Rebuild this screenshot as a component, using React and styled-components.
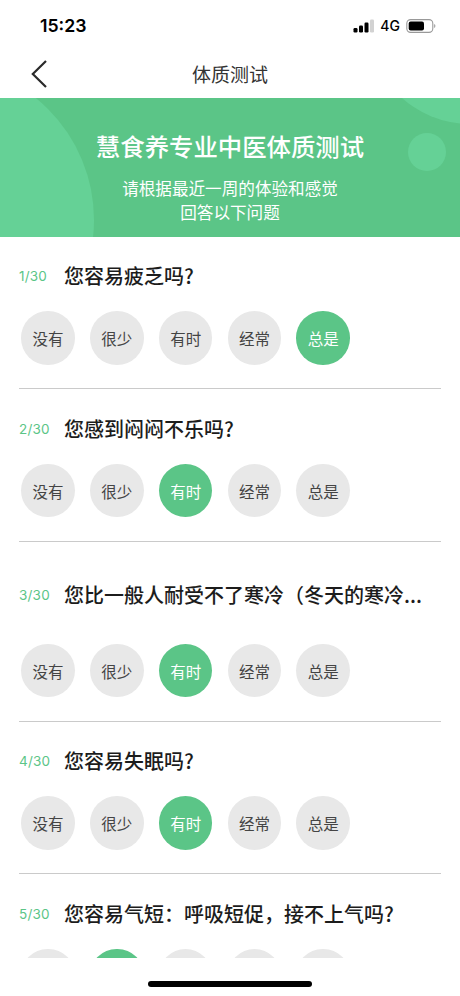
import React, { useState } from 'react';
import styled, { createGlobalStyle, ThemeProvider } from 'styled-components';

const theme = {
    colors: {
        green: '#5bc587',
        lightGreen: '#65d196',
        grey: '#e8e8e8',
        line: '#cacaca',
        white: '#fff',
        black: '#000',
        text: '#1c1c1c',
    },
};

const GlobalStyle = createGlobalStyle`
    * {
        box-sizing: border-box;
    }

    body {
        margin: 0;
        background-color: #fff;
        font-family: "Noto Sans CJK SC", sans-serif;
    }
`;

const Screen = styled.div`
    display: flex;
    flex-direction: column;
    height: 996px;
    overflow: hidden;
    background-color: ${({ theme }) => theme.colors.white};
`;

const StatusBar = styled.div`
    height: 50px;
    padding: 1px 23px 0 40px;
    display: flex;
    align-items: center;
    justify-content: space-between;
    color: ${({ theme }) => theme.colors.black};
    font-family: Inter, "Liberation Sans", sans-serif;
`;

const Time = styled.span`
    font-size: 17.7px;
    font-weight: 600;
`;

const StatusIcons = styled.div`
    display: flex;
    align-items: center;
`;

const Network = styled.span`
    margin: 0 6px 0 6px;
    font-size: 14px;
    font-weight: 500;
`;

const NavBar = styled.div`
    height: 48px;
    flex-shrink: 0;
    display: grid;
    grid-template-columns: 80px 1fr 80px;
    align-items: center;
`;

const BackButton = styled.button`
    display: flex;
    padding: 0 0 1px 30px;
    border: none;
    background: none;
`;

const Title = styled.h1`
    margin: 0;
    font-size: 19px;
    font-weight: 400;
    line-height: 28px;
    text-align: center;
    color: #333;
`;

const StyledBanner = styled.div`
    position: relative;
    height: 139px;
    flex-shrink: 0;
    padding-top: 30px;
    overflow: hidden;
    text-align: center;
    color: ${({ theme }) => theme.colors.white};
    background-color: ${({ theme }) => theme.colors.green};
`;

const Bubble = styled.span`
    position: absolute;
    top: ${({ $top }) => $top}px;
    left: ${({ $left }) => $left}px;
    width: ${({ $size }) => $size}px;
    height: ${({ $size }) => $size}px;
    border-radius: 50%;
    background-color: ${({ theme }) => theme.colors.lightGreen};
`;

const BannerTitle = styled.h2`
    position: relative;
    margin: 0 0 13px;
    font-size: 24.4px;
    font-weight: 500;
    line-height: 36px;
`;

const BannerText = styled.p`
    position: relative;
    margin: 0;
    font-size: 16.6px;
    font-weight: 400;
    line-height: 23.5px;
`;

const QuestionList = styled.div`
    height: 721px;
    flex-shrink: 0;
    padding: 0 19px;
    overflow: hidden;
`;

const StyledQuestion = styled.div`
    padding: 25.3px 0 23.5px;
    border-bottom: 1px solid ${({ theme }) => theme.colors.line};
`;

const QuestionHeader = styled.div`
    height: ${({ $tall }) => ($tall ? '55.5px' : '28px')};
    display: flex;
    align-items: center;
`;

const Counter = styled.span`
    width: 45px;
    flex-shrink: 0;
    font-family: Inter, "Liberation Sans", sans-serif;
    font-size: 13.5px;
    letter-spacing: 0.2px;
    color: ${({ theme }) => theme.colors.green};
`;

const QuestionText = styled.h3`
    margin: 0;
    min-width: 0;
    font-size: 20px;
    font-weight: 500;
    line-height: 28px;
    white-space: nowrap;
    color: ${({ theme }) => theme.colors.text};
`;

const Options = styled.div`
    display: flex;
    gap: 15.2px;
    margin-top: 21.1px;
    padding-left: 2.3px;
`;

const Option = styled.button`
    width: 53.6px;
    height: 53.6px;
    flex-shrink: 0;
    padding: 0;
    border: none;
    border-radius: 50%;
    font-family: inherit;
    font-size: 15.5px;
    color: ${({ $active, theme }) => ($active ? theme.colors.white : '#444')};
    background-color: ${({ $active, theme }) => ($active ? theme.colors.green : theme.colors.grey)};
`;

const BottomBar = styled.div`
    flex: 1;
    display: flex;
    justify-content: center;
    padding-top: 23px;
`;

const HomeIndicator = styled.div`
    width: 164px;
    height: 6px;
    border-radius: 3px;
    background-color: ${({ theme }) => theme.colors.black};
`;

const answers = ['没有', '很少', '有时', '经常', '总是'];

const questions = [
    { text: '您容易疲乏吗?', answer: 4 },
    { text: '您感到闷闷不乐吗?', answer: 2 },
    { text: '您比一般人耐受不了寒冷（冬天的寒冷...', answer: 2, tall: true },
    { text: '您容易失眠吗?', answer: 2 },
    { text: '您容易气短：呼吸短促，接不上气吗?', answer: 1 },
];

const SignalIcon = () => (
    <svg width="21" height="14" viewBox="0 0 21 14">
        <rect x="0.5" y="9" width="4" height="4.5" rx="1.2" />
        <rect x="6" y="6.5" width="4" height="7" rx="1.2" />
        <rect x="11.5" y="3.5" width="4" height="10" rx="1.2" />
        <rect x="17" y="0.5" width="4" height="13" rx="1.2" fill="#d2d2d2" />
    </svg>
);

const BatteryIcon = () => (
    <svg width="31" height="14" viewBox="0 0 31 14">
        <rect x="0.8" y="0.6" width="26" height="12.8" rx="3.8" fill="none" stroke="#999" strokeWidth="1.1" />
        <rect x="2.7" y="2.4" width="15.3" height="9.2" rx="2" />
        <path d="M28.2 5v4c1.6-.6 1.6-3.4 0-4z" fill="#999" />
    </svg>
);

const Question = ({ index, text, answer, tall }) => {
    const [selected, setSelected] = useState(answer);
    return (
        <StyledQuestion>
            <QuestionHeader $tall={tall}>
                <Counter>{`${index}/30`}</Counter>
                <QuestionText>{text}</QuestionText>
            </QuestionHeader>
            <Options>
                {answers.map((label, i) => (
                    <Option key={label} $active={i === selected} onClick={() => setSelected(i)}>{label}</Option>
                ))}
            </Options>
        </StyledQuestion>
    );
}

const App = () => (
    <ThemeProvider theme={theme}>
        <GlobalStyle />
        <Screen>
            <StatusBar>
                <Time>15:23</Time>
                <StatusIcons>
                    <SignalIcon />
                    <Network>4G</Network>
                    <BatteryIcon />
                </StatusIcons>
            </StatusBar>
            <NavBar>
                <BackButton aria-label="返回">
                    <svg width="18" height="28" viewBox="0 0 18 28" fill="none" stroke="#2a2a2a" strokeWidth="2.2">
                        <path d="M16 1L2.8 14L16 27" />
                    </svg>
                </BackButton>
                <Title>体质测试</Title>
            </NavBar>
            <StyledBanner>
                <Bubble $top={-35} $left={-220} $size={314} />
                <Bubble $top={-178} $left={368} $size={204} />
                <Bubble $top={34.5} $left={407.5} $size={38} />
                <BannerTitle>慧食养专业中医体质测试</BannerTitle>
                <BannerText>请根据最近一周的体验和感觉</BannerText>
                <BannerText>回答以下问题</BannerText>
            </StyledBanner>
            <QuestionList>
                {questions.map((question, i) => (
                    <Question key={question.text} index={i + 1} {...question} />
                ))}
            </QuestionList>
            <BottomBar>
                <HomeIndicator />
            </BottomBar>
        </Screen>
    </ThemeProvider>
);

export default App;
